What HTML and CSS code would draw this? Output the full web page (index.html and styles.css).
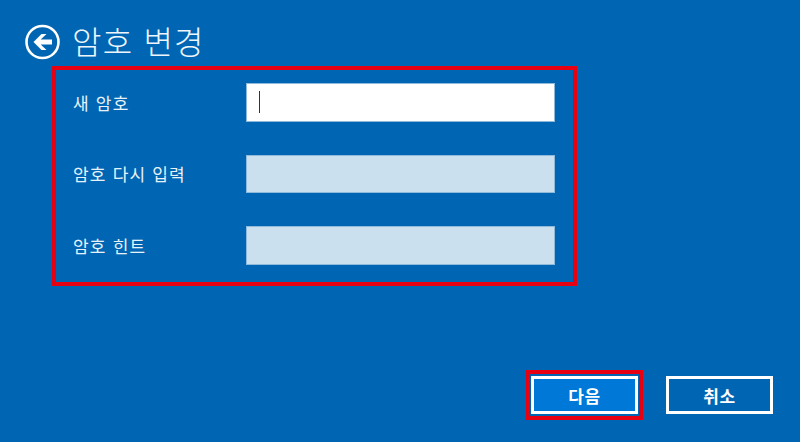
FILE: index.html
```html
<!DOCTYPE html>
<html lang="ko">

<head>
    <meta charset="UTF-8">
    <meta name="viewport" content="width=device-width, initial-scale=1.0">
    <title>암호 변경</title>
    <link rel="stylesheet" href="styles.css">
</head>

<body>
    <div class="header">
        <button class="back-button" aria-label="뒤로">
            <svg width="36" height="36" viewBox="0 0 36 36">
                <circle cx="18.5" cy="18" r="16" fill="none" stroke="#fff" stroke-width="2.6" />
                <path d="M9.5 18 L17.5 10 H22.5 L16.7 15.6 H28 V20.4 H16.7 L22.5 26 H17.5 Z" fill="#fff" />
            </svg>
        </button>
        <h1 class="title">암호 변경</h1>
    </div>

    <form class="form-box">
        <div class="form-group">
            <label for="newPassword">새 암호</label>
            <div class="input active" id="newPassword"><span class="caret"></span></div>
        </div>
        <div class="form-group">
            <label for="confirmPassword">암호 다시 입력</label>
            <div class="input" id="confirmPassword"></div>
        </div>
        <div class="form-group">
            <label for="passwordHint">암호 힌트</label>
            <div class="input" id="passwordHint"></div>
        </div>
    </form>

    <div class="footer">
        <div class="highlight">
            <button class="button primary">다음</button>
        </div>
        <button class="button">취소</button>
    </div>
</body>

</html>
```

FILE: styles.css
```css
html,
body {
    height: 100%;
}

body {
    display: flex;
    flex-direction: column;
    box-sizing: border-box;
    height: 442px;
    margin: 0;
    padding: 24px 27px 22px 24px;
    overflow: hidden;
    background-color: #0066b3;
    color: #fff;
    font-family: "Noto Sans CJK KR", "Liberation Sans", sans-serif;
}

.header {
    display: flex;
    align-items: center;
    height: 36px;
    margin-bottom: 6px;
}

.back-button {
    width: 36px;
    height: 36px;
    padding: 0;
    background: none;
    border: none;
}

.title {
    margin: 0 0 4px 12px;
    font-size: 32px;
    font-weight: 300;
    line-height: 36px;
    letter-spacing: 1.2px;
    color: #eef6fb;
}

.form-box {
    display: flex;
    flex-direction: column;
    gap: 33px;
    box-sizing: border-box;
    width: 525px;
    height: 220px;
    margin-left: 28px;
    padding: 13px 18px 0 17px;
    border: 4px solid #e60012;
}

.form-group {
    display: flex;
    align-items: center;
    justify-content: space-between;
}

.form-group label {
    font-size: 17px;
    letter-spacing: 1.2px;
    color: #e8f2f9;
}

.input {
    display: flex;
    align-items: center;
    box-sizing: border-box;
    width: 309px;
    height: 38.5px;
    padding-left: 12px;
    background-color: #cbe0ef;
    border: 1px solid #8db9da;
}

.input.active {
    background-color: #fff;
}

.caret {
    width: 1px;
    height: 22px;
    background-color: #333;
}

.footer {
    display: flex;
    align-items: center;
    justify-content: flex-end;
    gap: 23px;
    margin-top: auto;
}

.highlight {
    padding: 2px 1px;
    border: 4px solid #e60012;
}

.button {
    display: block;
    box-sizing: border-box;
    width: 107px;
    height: 38px;
    padding: 0;
    font-family: inherit;
    font-size: 17px;
    font-weight: 700;
    letter-spacing: 0.5px;
    color: #fff;
    background-color: #0066b3;
    border: 3px solid #fff;
}

.button.primary {
    background-color: #0078d7;
}
```
